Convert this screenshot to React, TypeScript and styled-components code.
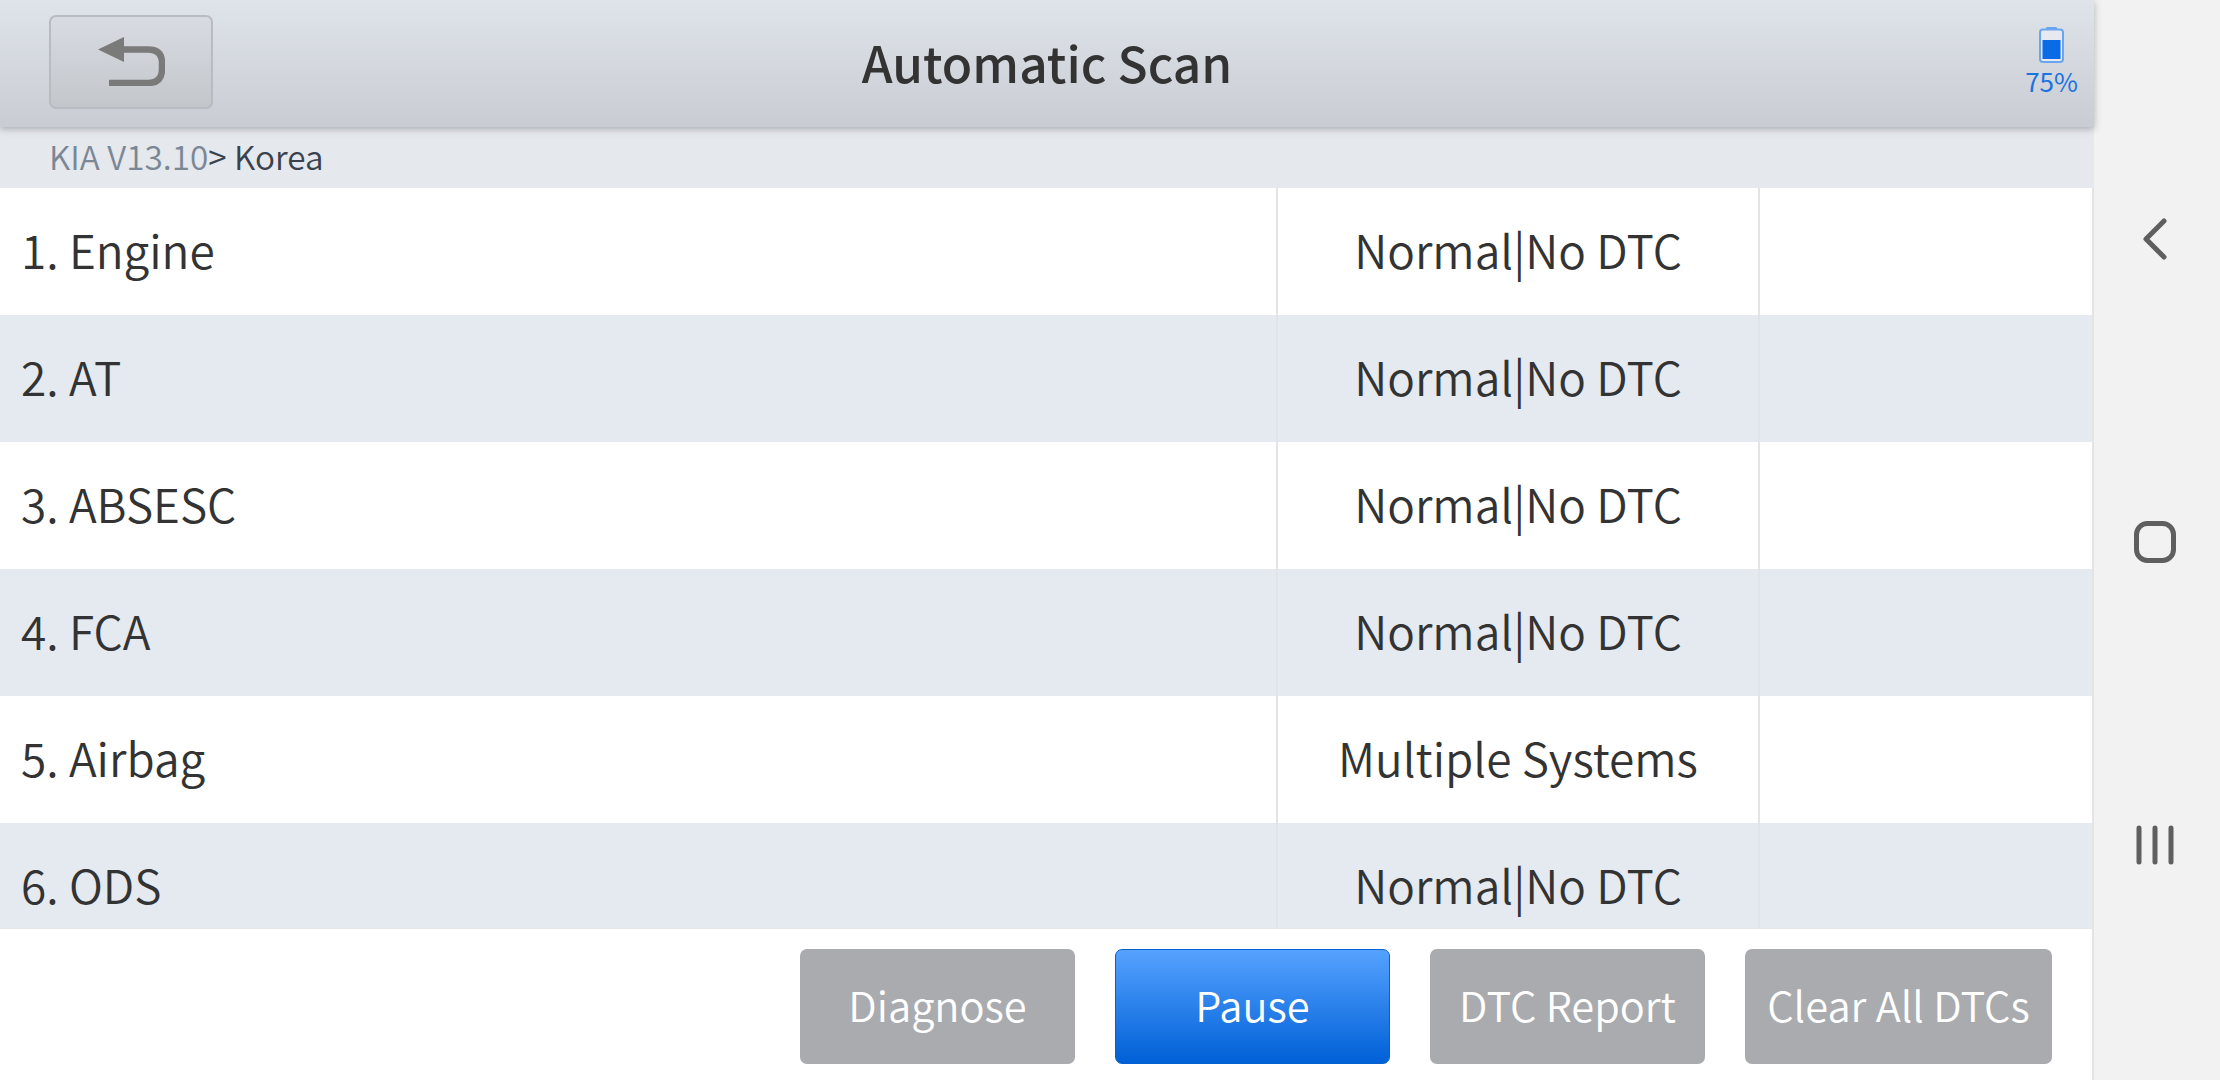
import React from "react";
import styled, { createGlobalStyle } from "styled-components";

const Global = createGlobalStyle`
  html, body { margin: 0; padding: 0; height: 100%; background: #fff; overflow: hidden; }
  * { box-sizing: border-box; }
  body { font-family: "Noto Sans CJK SC", "Noto Sans", sans-serif; color: #333; }
`;

const Screen = styled.div`
  display: flex;
  width: 2220px;
  height: 1080px;
`;
const Main = styled.main`
  display: flex;
  flex-direction: column;
  width: 2094px;
  height: 1080px;
`;
const Header = styled.header`
  position: relative;
  z-index: 2;
  flex: 0 0 127px;
  display: grid;
  grid-template-columns: 1fr auto 1fr;
  align-items: center;
  padding: 0 16px 4px 16px;
  background: linear-gradient(180deg, #dfe3ea 0%, #c9ccd3 100%);
  box-shadow: 0 2px 7px rgba(90, 95, 105, 0.45);
`;
const BackButton = styled.button`
  width: 164px;
  height: 94px;
  margin-left: 33px;
  padding: 0;
  display: flex;
  align-items: center;
  justify-content: center;
  border: 2px solid #b8bbc0;
  border-radius: 7px;
  background: linear-gradient(180deg, #d8dbe1 0%, #c3c6cb 100%);
`;
const Title = styled.h1`
  margin: 0;
  font-size: 49.6px;
  font-weight: 500;
  line-height: 1;
  color: #333;
`;
const Battery = styled.div`
  justify-self: end;
  display: flex;
  flex-direction: column;
  align-items: center;
  gap: 3px;
  font-size: 26px;
  line-height: 30px;
  color: #1a73e0;
`;
const Crumbs = styled.div`
  flex: 0 0 61px;
  display: flex;
  align-items: center;
  padding: 0 0 4px 49px;
  background: #e5e8ed;
  font-size: 33.3px;
  font-weight: 350;
  color: #39424d;
`;
const CrumbRoot = styled.span`
  color: #7b8794;
`;
const List = styled.div`
  flex: 1;
  min-height: 0;
  overflow: hidden;
  border-right: 2px solid #e4e4e4;
`;
const Row = styled.div<{ $odd: boolean }>`
  display: grid;
  grid-template-columns: 1276px 484px 1fr;
  height: 127px;
  background: ${(p) => (p.$odd ? "#e5e9f0" : "#fff")};
`;
const Name = styled.div`
  display: flex;
  align-items: center;
  padding: 0 0 6px 21px;
  font-size: 46px;
  font-weight: 350;
  color: #333;
`;
const Status = styled.div`
  display: flex;
  align-items: center;
  justify-content: center;
  padding-bottom: 6px;
  border-left: 2px solid #e2e4e7;
  border-right: 2px solid #e2e4e7;
  font-size: 46px;
  font-weight: 350;
  color: #333;
`;
const Footer = styled.footer`
  flex: 0 0 152px;
  display: flex;
  justify-content: flex-end;
  gap: 40px;
  padding: 20px 40px 0 0;
  border-top: 1px solid #e4e6e9;
  border-right: 2px solid #e4e4e4;
  background: #fff;
`;
const ActionButton = styled.button<{ $primary?: boolean; $w: number }>`
  width: ${(p) => p.$w}px;
  height: 115px;
  padding: 0 0 5px;
  font-family: inherit;
  font-size: 41.6px;
  font-weight: 350;
  color: #fff;
  border-radius: 7px;
  border: ${(p) => (p.$primary ? "1px solid #0561cf" : "none")};
  background: ${(p) =>
    p.$primary ? "linear-gradient(180deg, #55a2ff 0%, #0060d6 100%)" : "#a9abaf"};
`;
const NavBar = styled.nav`
  flex: 0 0 126px;
  display: grid;
  grid-auto-rows: 303px;
  align-content: center;
  justify-items: center;
  align-items: center;
  padding: 4px 5px 0 0;
  background: #f2f2f2;
`;

const rows = [
  ["1. Engine", "Normal|No DTC"],
  ["2. AT", "Normal|No DTC"],
  ["3. ABSESC", "Normal|No DTC"],
  ["4. FCA", "Normal|No DTC"],
  ["5. Airbag", "Multiple Systems"],
  ["6. ODS", "Normal|No DTC"],
];

const BackIcon = () => (
  <svg width="67" height="49" viewBox="0 0 67 49" fill="none">
    <path d="M0 12.5 L26 0 V25 Z" fill="#7a7a7a" />
    <path d="M24 12.5 H50 Q64 12.5 64 26 V32 Q64 46 50 46 H11" stroke="#7a7a7a" strokeWidth="6.5" />
  </svg>
);
const BatteryIcon = () => (
  <svg width="25" height="36" viewBox="0 0 25 36">
    <rect x="7" y="0" width="11" height="3" rx="1" fill="#6aa6ef" />
    <rect x="1" y="2.5" width="23" height="32.5" rx="3" fill="#e6eaf0" stroke="#6aa6ef" strokeWidth="2" />
    <rect x="3.5" y="13" width="18" height="19" fill="#0a6be6" />
  </svg>
);
const ChevronIcon = () => (
  <svg width="26" height="42" viewBox="0 0 26 42" fill="none">
    <path d="M22 3 L4 21 L22 39" stroke="#5f5f5f" strokeWidth="5" strokeLinecap="round" strokeLinejoin="round" />
  </svg>
);
const HomeIcon = () => (
  <svg width="42" height="42" viewBox="0 0 42 42" fill="none">
    <rect x="2.5" y="2.5" width="37" height="37" rx="11" stroke="#5f5f5f" strokeWidth="5" />
  </svg>
);
const RecentsIcon = () => (
  <svg width="38" height="40" viewBox="0 0 38 40" fill="none">
    <path d="M3 3 V37 M19 3 V37 M35 3 V37" stroke="#5f5f5f" strokeWidth="5" strokeLinecap="round" />
  </svg>
);

export default function App() {
  return (
    <Screen>
      <Global />
      <Main>
        <Header>
          <BackButton aria-label="Back">
            <BackIcon />
          </BackButton>
          <Title>Automatic Scan</Title>
          <Battery>
            <BatteryIcon />
            <span>75%</span>
          </Battery>
        </Header>
        <Crumbs>
          <CrumbRoot>KIA V13.10</CrumbRoot>
          <span>&gt; Korea</span>
        </Crumbs>
        <List>
          {rows.map(([name, status], i) => (
            <Row key={name} $odd={i % 2 === 1}>
              <Name>{name}</Name>
              <Status>{status}</Status>
              <div />
            </Row>
          ))}
        </List>
        <Footer>
          <ActionButton $w={275}>Diagnose</ActionButton>
          <ActionButton $w={275} $primary>Pause</ActionButton>
          <ActionButton $w={275}>DTC Report</ActionButton>
          <ActionButton $w={307}>Clear All DTCs</ActionButton>
        </Footer>
      </Main>
      <NavBar>
        <ChevronIcon />
        <HomeIcon />
        <RecentsIcon />
      </NavBar>
    </Screen>
  );
}
